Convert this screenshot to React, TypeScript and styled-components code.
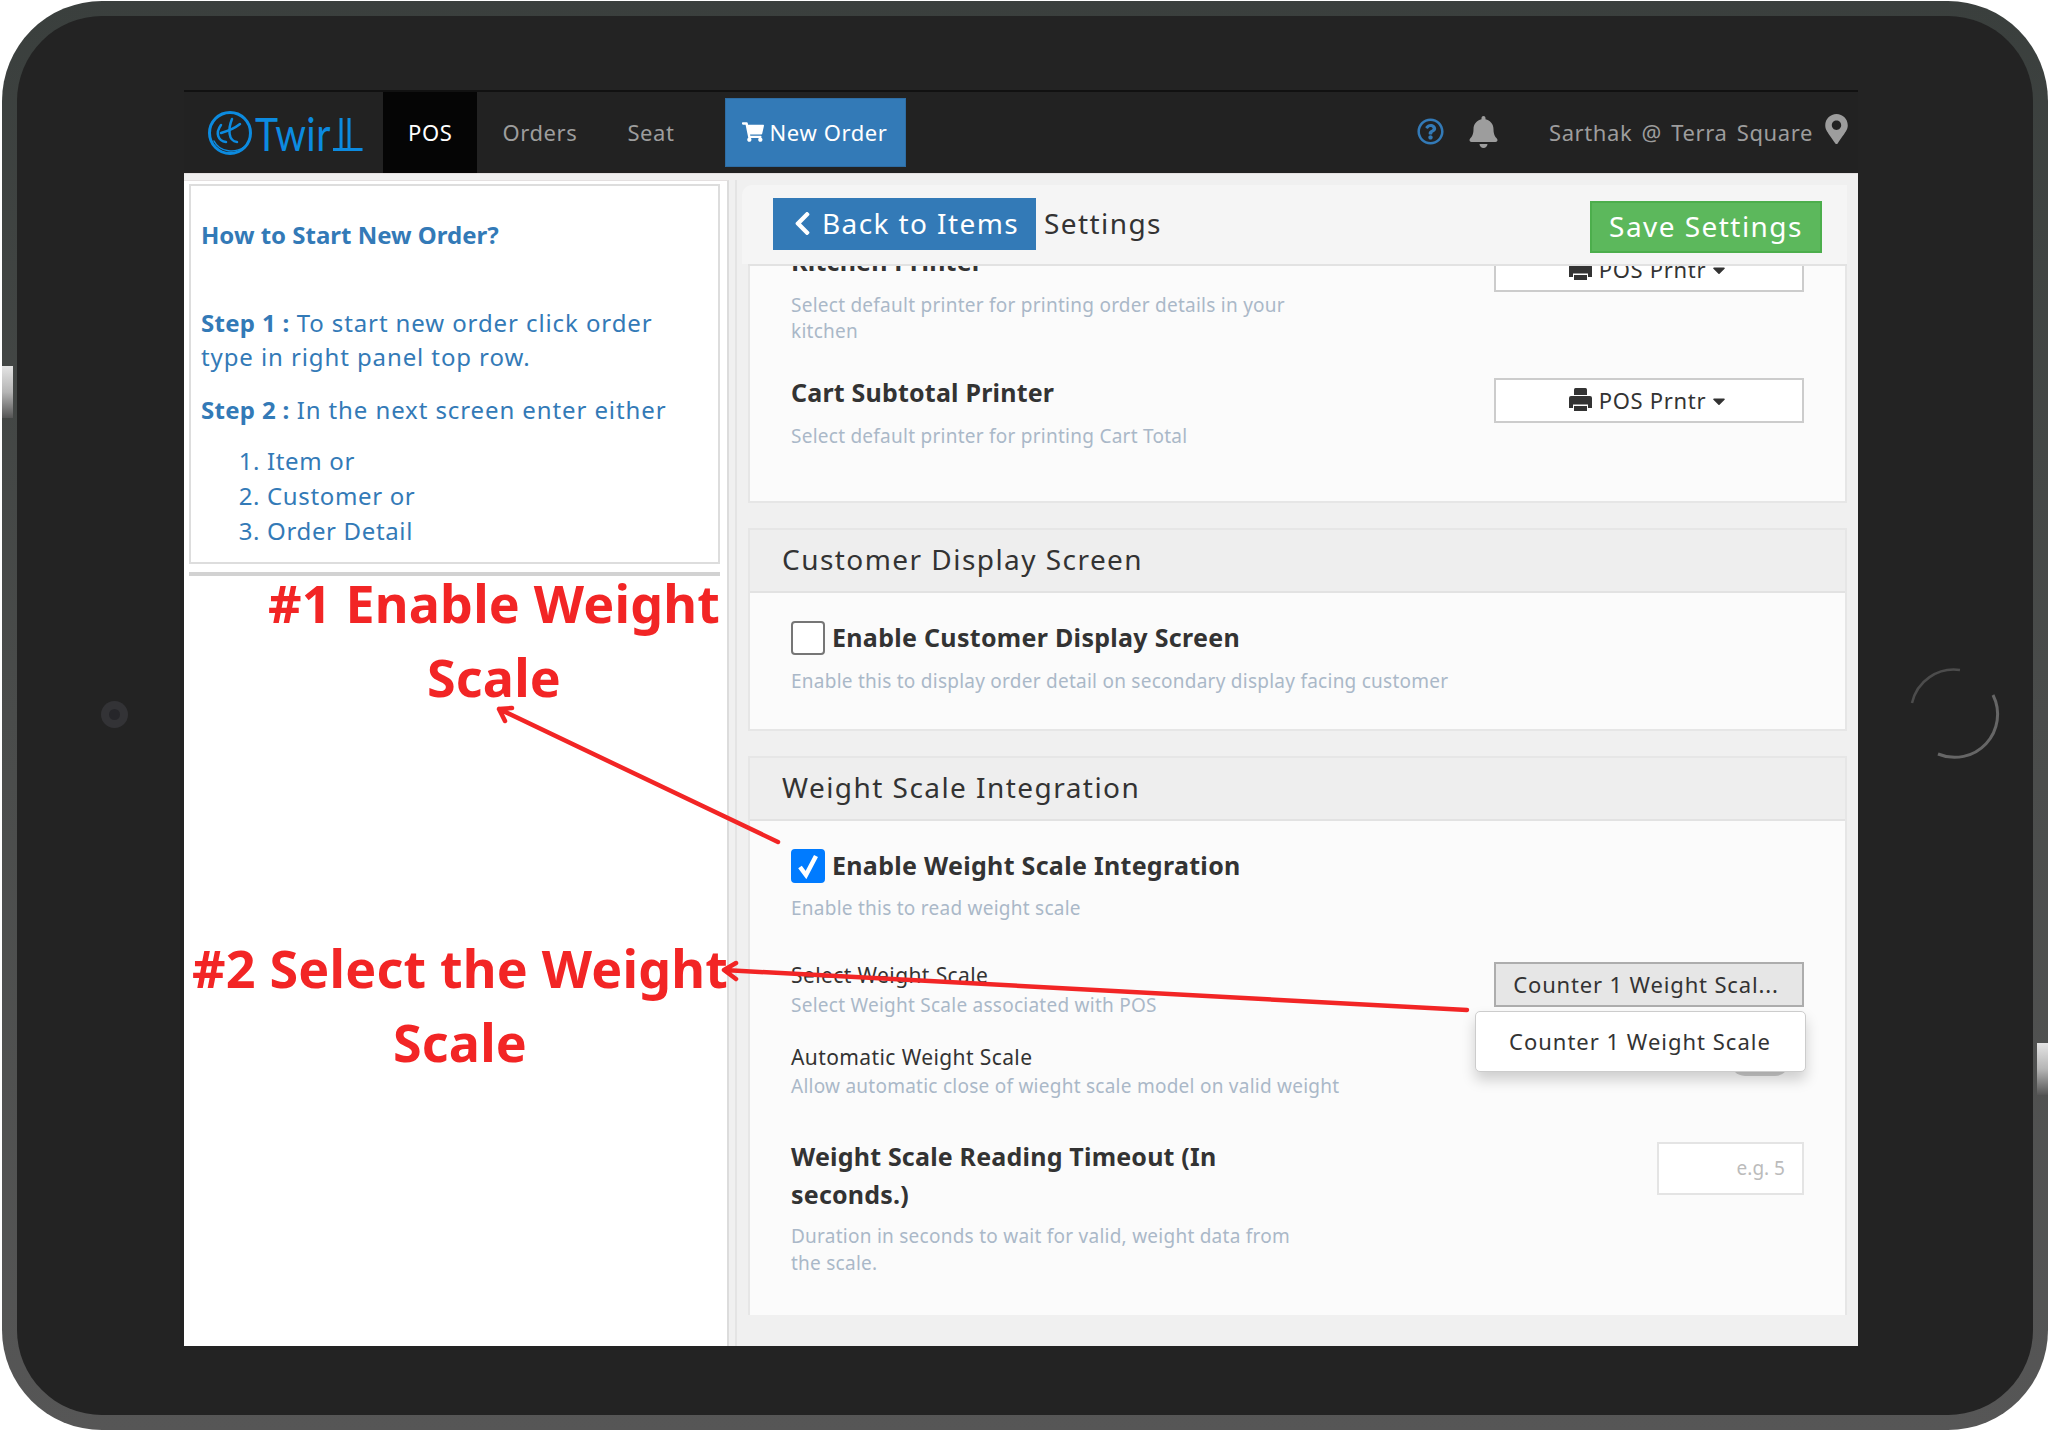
import React from "react";
import styled, { createGlobalStyle } from "styled-components";
import {
  FaBell,
  FaCaretDown,
  FaChevronLeft,
  FaMapMarkerAlt,
  FaRegQuestionCircle,
  FaShoppingCart,
} from "react-icons/fa";

const GlobalStyle = createGlobalStyle`
  html, body {
    margin: 0;
    padding: 0;
    background: #fff;
  }
  * {
    box-sizing: border-box;
  }
  body {
    font-family: "Noto Sans", "Open Sans", sans-serif;
    color: #333;
  }
`;

const Device = styled.div`
  position: relative;
  width: 2048px;
  height: 1432px;
  padding: 1px 0 2px 2px;
  overflow: hidden;
  background: #fff;
`;

const Frame = styled.div`
  height: 100%;
  padding: 15px;
  border-radius: 100px;
  background: linear-gradient(180deg, #3a3f3d 0%, #4a4c4b 50%, #565656 100%);
`;

const Bezel = styled.div`
  height: 100%;
  padding: 74px 175px 69px 167px;
  border-radius: 85px;
  background: #232323;
`;

const Screen = styled.div`
  display: flex;
  flex-direction: column;
  height: 100%;
  background: #f0f0f0;
`;

const NavBar = styled.header`
  display: flex;
  flex: none;
  align-items: stretch;
  height: 83px;
  border-top: 2px solid #111;
  background: #222;
  color: #9d9d9d;
  font-size: 22px;
  letter-spacing: 0.6px;
`;

const LogoBox = styled.div`
  display: flex;
  flex: none;
  align-items: center;
  width: 199px;
  padding-left: 24px;
`;

const NavItem = styled.a<{ $active?: boolean }>`
  display: flex;
  align-items: center;
  padding: 0 25px 2px;
  background: ${(props) => (props.$active ? "#050505" : "transparent")};
  color: ${(props) => (props.$active ? "#fff" : "#9d9d9d")};
`;

const NewOrderButton = styled.a`
  display: flex;
  align-items: center;
  gap: 6px;
  height: 69px;
  margin: 6px 0 0 25px;
  padding: 0 17px 2px 16px;
  border: 1px solid #2e6da4;
  background: #337ab7;
  color: #fff;
`;

const NavRight = styled.div`
  display: flex;
  align-items: center;
  margin-left: auto;
  padding: 0 10px 2px 0;
  word-spacing: 3px;
`;

const HelpIcon = styled(FaRegQuestionCircle)`
  width: 27px;
  height: 27px;
  color: #337ab7;
`;

const BellIcon = styled(FaBell)`
  width: 29px;
  height: 32px;
  margin: 0 51px 0 25px;
  color: #9d9d9d;
`;

const PinIcon = styled(FaMapMarkerAlt)`
  width: 23px;
  height: 30px;
  margin: -6px 0 0 12px;
  color: #9d9d9d;
`;

const Body = styled.div`
  display: flex;
  flex: 1;
  min-height: 0;
  padding-top: 6px;
  border-top: 1px solid #e4e0e0;
`;

const LeftPanel = styled.aside`
  flex: none;
  width: 545px;
  padding: 3px 7px 0 5px;
  border-top: 1px solid #e4e0e0;
  border-right: 2px solid #dcdcdc;
  background: #fff;
`;

const HelpBox = styled.div`
  height: 380px;
  padding: 31px 10px 0;
  border: 2px solid #ddd;
  color: #337ab7;
  font-size: 24px;
  line-height: 34px;
`;

const HelpTitle = styled.h3`
  margin: 0 0 53px;
  font-size: 24px;
  line-height: 36px;
  font-weight: 700;
`;

const HelpPara = styled.p`
  margin: 0 0 19px;
  padding-right: 24px;
  letter-spacing: 0.9px;

  strong {
    letter-spacing: 0.3px;
  }
`;

const HelpList = styled.ol`
  margin: -3px 0 0;
  padding-left: 66px;
  letter-spacing: 0.65px;
  line-height: 35px;
`;

const HelpDivider = styled.hr`
  height: 4px;
  margin: 8px 0 0;
  border: 0;
  background: #d2d2d2;
`;

const RightPanel = styled.main`
  display: flex;
  flex: 1;
  flex-direction: column;
  min-width: 0;
  margin-left: 6px;
  padding: 5px 11px 31px 11px;
  border-left: 2px solid #e4e4e4;
`;

const SettingsBar = styled.div`
  display: flex;
  flex: none;
  align-items: flex-start;
  height: 79px;
  margin-left: -6px;
  padding: 13px 25px 0 31px;
  border-radius: 10px 0 0 0;
  background: #f5f5f5;
`;

const BackButton = styled.a`
  display: flex;
  align-items: center;
  gap: 6px;
  height: 52px;
  padding: 0 17px 2px 16px;
  background: #337ab7;
  color: #fff;
  font-size: 28px;
  letter-spacing: 1.4px;
`;

const SettingsTitle = styled.span`
  margin-left: 8px;
  font-size: 28px;
  letter-spacing: 1.4px;
  line-height: 50px;
`;

const SaveButton = styled.a`
  display: flex;
  align-items: center;
  justify-content: center;
  width: 232px;
  height: 52px;
  margin: 3px 0 0 auto;
  padding-bottom: 2px;
  border: 2px solid #4cae4c;
  background: #5cb85c;
  color: #fff;
  font-size: 28px;
  letter-spacing: 1.45px;
`;

const ScrollArea = styled.div`
  display: flex;
  flex: 1;
  flex-direction: column;
  gap: 25px;
  min-height: 0;
  overflow: hidden;
  border-top: 2px solid #e2e2e2;
`;

const Card = styled.section<{ $clipped?: boolean }>`
  flex: none;
  margin-top: ${(props) => (props.$clipped ? "-25px" : "0")};
  border: 2px solid #e6e6e6;
  background: #fbfbfb;
`;

const CardHeader = styled.h2`
  height: 63px;
  margin: 0;
  padding-left: 32px;
  border-bottom: 2px solid #e2e2e2;
  background: #eee;
  font-size: 28px;
  font-weight: 400;
  letter-spacing: 1.45px;
  line-height: 58px;
`;

const CardBody = styled.div<{ $bottom: number; $top: number }>`
  display: flex;
  flex-direction: column;
  padding: ${(props) => props.$top}px 41px ${(props) => props.$bottom}px;
`;

const Row = styled.div<{ $top?: number }>`
  display: flex;
  align-items: flex-start;
  justify-content: space-between;
  margin-top: ${(props) => props.$top ?? 0}px;
`;

const RowText = styled.div`
  width: 520px;
`;

const SettingTitle = styled.div`
  margin: -1px 0 1px;
  font-size: 25px;
  font-weight: 700;
  letter-spacing: 0.2px;
  line-height: 38px;
`;

const SettingLabel = styled.div`
  font-size: 21px;
  letter-spacing: 0.4px;
  line-height: 26px;
`;

const SettingDesc = styled.div<{ $top?: number; $wide?: boolean; $line?: number }>`
  width: ${(props) => (props.$wide ? "900px" : "auto")};
  margin-top: ${(props) => props.$top ?? 0}px;
  color: #aab8c8;
  font-size: 19px;
  letter-spacing: 0.25px;
  line-height: ${(props) => props.$line ?? 26}px;
`;

const CheckRow = styled.div`
  display: flex;
  align-items: center;
  gap: 7px;
  height: 34px;
  font-size: 25px;
  font-weight: 700;
  letter-spacing: 0.3px;
`;

const CheckLabel = styled.span`
  margin-bottom: 2px;
`;

const CheckBox = styled.span<{ $checked?: boolean }>`
  display: flex;
  align-items: center;
  justify-content: center;
  width: 34px;
  height: 34px;
  border: 2px solid ${(props) => (props.$checked ? "#007bff" : "#767676")};
  border-radius: 4px;
  background: ${(props) => (props.$checked ? "#007bff" : "#fff")};
`;

const Dropdown = styled.div<{ $open?: boolean }>`
  position: relative;
  display: flex;
  flex: none;
  align-items: center;
  justify-content: center;
  gap: 7px;
  width: 310px;
  height: 45px;
  padding: 0 ${(props) => (props.$open ? "6px" : "0")} 2px 0;
  border: 2px solid ${(props) => (props.$open ? "#adadad" : "#ccc")};
  background: ${(props) => (props.$open ? "#e6e6e6" : "#fff")};
  font-size: 22px;
  letter-spacing: ${(props) => (props.$open ? "0.85px" : "0.7px")};
`;

const PrinterSlot = styled.div`
  margin-top: 4px;
`;

const DropdownCaret = styled(FaCaretDown)`
  width: 20px;
  height: 20px;
  margin: 3px 0 0 -4px;
`;

const DropdownMenu = styled.div`
  position: absolute;
  top: 47px;
  left: -21px;
  z-index: 2;
  width: 331px;
  height: 61px;
  padding-left: 33px;
  border: 1px solid #ccc;
  border-radius: 5px;
  background: #fff;
  box-shadow: 0 8px 14px rgba(0, 0, 0, 0.18);
  letter-spacing: 1px;
  line-height: 59px;
`;

const Toggle = styled.span`
  flex: none;
  width: 60px;
  height: 30px;
  margin: 2px 14px 0 0;
  border-radius: 15px;
  background: #ccc;
`;

const NumberInput = styled.div`
  flex: none;
  width: 147px;
  height: 53px;
  margin-top: 4px;
  padding-right: 17px;
  border: 2px solid #e4e4e4;
  background: #fff;
  color: #bbb;
  font-size: 19px;
  line-height: 49px;
  text-align: right;
`;

const Annotation = styled.div<{ $left: number; $top: number; $width: number }>`
  position: absolute;
  top: ${(props) => props.$top}px;
  left: ${(props) => props.$left}px;
  width: ${(props) => props.$width}px;
  color: #f22525;
  font-size: 52px;
  font-weight: 700;
  letter-spacing: 0.2px;
  line-height: 74px;
  text-align: center;
`;

const ArrowLayer = styled.svg`
  position: absolute;
  top: 0;
  left: 0;
  pointer-events: none;
`;

const SideButton = styled.div<{ $side: "left" | "right"; $top: number }>`
  position: absolute;
  top: ${(props) => props.$top}px;
  ${(props) => props.$side}: ${(props) => (props.$side === "left" ? 2 : 0)}px;
  width: 11px;
  height: 52px;
  background: linear-gradient(180deg, #e4e4e4 0%, #b5b5b5 50%, #555 100%);
`;

const Camera = styled.div`
  position: absolute;
  top: 701px;
  left: 101px;
  display: flex;
  align-items: center;
  justify-content: center;
  width: 27px;
  height: 27px;
  border-radius: 50%;
  background: #333336;

  &::after {
    content: "";
    width: 11px;
    height: 11px;
    border-radius: 50%;
    background: #26262a;
  }
`;

function Logo() {
  return (
    <svg width="160" height="60" viewBox="0 0 160 60" fill="none">
      <g stroke="#0c8be0" strokeLinecap="round">
        <circle cx="22" cy="30" r="20.5" strokeWidth="3" />
        <path d="M36 44 C28 50 12 50 6 38" strokeWidth="1.5" />
        <path d="M13 22 C7 30 10 38 18 39" strokeWidth="2.5" />
        <path d="M13 30 C20 28 27 25 32 21" strokeWidth="2.5" />
        <path d="M24 16 C20 26 20 38 29 39" strokeWidth="2.5" />
      </g>
      <text
        x="47"
        y="48"
        fill="#0c8be0"
        fontFamily="Lato, sans-serif"
        fontSize="46"
        textLength="76"
        lengthAdjust="spacingAndGlyphs"
      >
        Twir
      </text>
      <path d="M125 46.500H142M133 15V46.500M141 15V46.500H154.500" stroke="#0c8be0" strokeWidth="3" />
    </svg>
  );
}

function CheckMark() {
  return (
    <svg width="24" height="26" viewBox="0 0 24 26" fill="none">
      <path d="M4 14 L10 22 L20 3" stroke="#fff" strokeWidth="4.500" />
    </svg>
  );
}

function PrinterIcon() {
  return (
    <svg width="23" height="23" viewBox="0 0 23 23" fill="#333">
      <path d="M5 1.500Q5 0 6.500 0H16.500Q18 0 18 1.500V7H5Z" />
      <path d="M0 10Q0 8 2 8H21Q23 8 23 10V20H19V16.500H4V20H0Z" />
      <path d="M5 18H18V23H5Z" />
    </svg>
  );
}

function PrinterDropdown() {
  return (
    <PrinterSlot>
      <Dropdown>
        <PrinterIcon />
        POS Prntr
        <DropdownCaret />
      </Dropdown>
    </PrinterSlot>
  );
}

export default function App() {
  return (
    <Device>
      <GlobalStyle />
      <Frame>
        <Bezel>
          <Screen>
            <NavBar>
              <LogoBox>
                <Logo />
              </LogoBox>
              <NavItem $active>POS</NavItem>
              <NavItem>Orders</NavItem>
              <NavItem>Seat</NavItem>
              <NewOrderButton>
                <FaShoppingCart size={22} />
                New Order
              </NewOrderButton>
              <NavRight>
                <HelpIcon />
                <BellIcon />
                Sarthak @ Terra Square
                <PinIcon />
              </NavRight>
            </NavBar>
            <Body>
              <LeftPanel>
                <HelpBox>
                  <HelpTitle>How to Start New Order?</HelpTitle>
                  <HelpPara>
                    <strong>Step 1 :</strong> To start new order click order type in right panel top row.
                  </HelpPara>
                  <HelpPara>
                    <strong>Step 2 :</strong> In the next screen enter either
                  </HelpPara>
                  <HelpList>
                    <li>Item or</li>
                    <li>Customer or</li>
                    <li>Order Detail</li>
                  </HelpList>
                </HelpBox>
                <HelpDivider />
              </LeftPanel>
              <RightPanel>
                <SettingsBar>
                  <BackButton>
                    <FaChevronLeft size={27} />
                    Back to Items
                  </BackButton>
                  <SettingsTitle>Settings</SettingsTitle>
                  <SaveButton>Save Settings</SaveButton>
                </SettingsBar>
                <ScrollArea>
                  <Card $clipped>
                    <CardBody $top={0} $bottom={52}>
                      <Row>
                        <RowText>
                          <SettingTitle>Kitchen Printer</SettingTitle>
                          <SettingDesc $top={12}>
                            Select default printer for printing order details in your kitchen
                          </SettingDesc>
                        </RowText>
                        <PrinterDropdown />
                      </Row>
                      <Row $top={30}>
                        <RowText>
                          <SettingTitle>Cart Subtotal Printer</SettingTitle>
                          <SettingDesc $top={12}>Select default printer for printing Cart Total</SettingDesc>
                        </RowText>
                        <PrinterDropdown />
                      </Row>
                    </CardBody>
                  </Card>
                  <Card>
                    <CardHeader>Customer Display Screen</CardHeader>
                    <CardBody $top={28} $bottom={35}>
                      <CheckRow>
                        <CheckBox />
                        <CheckLabel>Enable Customer Display Screen</CheckLabel>
                      </CheckRow>
                      <SettingDesc $top={13}>
                        Enable this to display order detail on secondary display facing customer
                      </SettingDesc>
                    </CardBody>
                  </Card>
                  <Card>
                    <CardHeader>Weight Scale Integration</CardHeader>
                    <CardBody $top={28} $bottom={38}>
                      <CheckRow>
                        <CheckBox $checked>
                          <CheckMark />
                        </CheckBox>
                        <CheckLabel>Enable Weight Scale Integration</CheckLabel>
                      </CheckRow>
                      <SettingDesc $top={12}>Enable this to read weight scale</SettingDesc>
                      <Row $top={41}>
                        <RowText>
                          <SettingLabel>Select Weight Scale</SettingLabel>
                          <SettingDesc $top={4}>Select Weight Scale associated with POS</SettingDesc>
                        </RowText>
                        <Dropdown $open>
                          Counter 1 Weight Scal...
                          <DropdownMenu>Counter 1 Weight Scale</DropdownMenu>
                        </Dropdown>
                      </Row>
                      <Row $top={26}>
                        <RowText>
                          <SettingLabel>Automatic Weight Scale</SettingLabel>
                          <SettingDesc $top={3} $wide>
                            Allow automatic close of wieght scale model on valid weight
                          </SettingDesc>
                        </RowText>
                        <Toggle />
                      </Row>
                      <Row $top={39}>
                        <RowText>
                          <SettingTitle>Weight Scale Reading Timeout (In seconds.)</SettingTitle>
                          <SettingDesc $top={10} $line={27}>
                            Duration in seconds to wait for valid, weight data from the scale.
                          </SettingDesc>
                        </RowText>
                        <NumberInput>e.g. 5</NumberInput>
                      </Row>
                    </CardBody>
                  </Card>
                </ScrollArea>
              </RightPanel>
            </Body>
          </Screen>
        </Bezel>
      </Frame>

      <SideButton $side="left" $top={366} />
      <SideButton $side="right" $top={1043} />
      <Camera />

      <ArrowLayer width="2048" height="1432" viewBox="0 0 2048 1432" fill="none">
        <path d="M1912 703A43 43 0 0 1 1960 670" stroke="#4c4c4c" strokeWidth="2.500" />
        <path d="M1993 695A43 43 0 0 1 1938 754" stroke="#666" strokeWidth="3" />
        <g stroke="#f22525" strokeWidth="4.500" strokeLinecap="round" strokeLinejoin="round">
          <path d="M778 842L499 709M512 708L499 709L505 721" />
          <path d="M1467 1010L724 970M736 963L724 970L736 979" />
        </g>
      </ArrowLayer>

      <Annotation $left={259} $top={566} $width={470}>
        #1 Enable Weight Scale
      </Annotation>
      <Annotation $left={165} $top={931} $width={590}>
        #2 Select the Weight Scale
      </Annotation>
    </Device>
  );
}
